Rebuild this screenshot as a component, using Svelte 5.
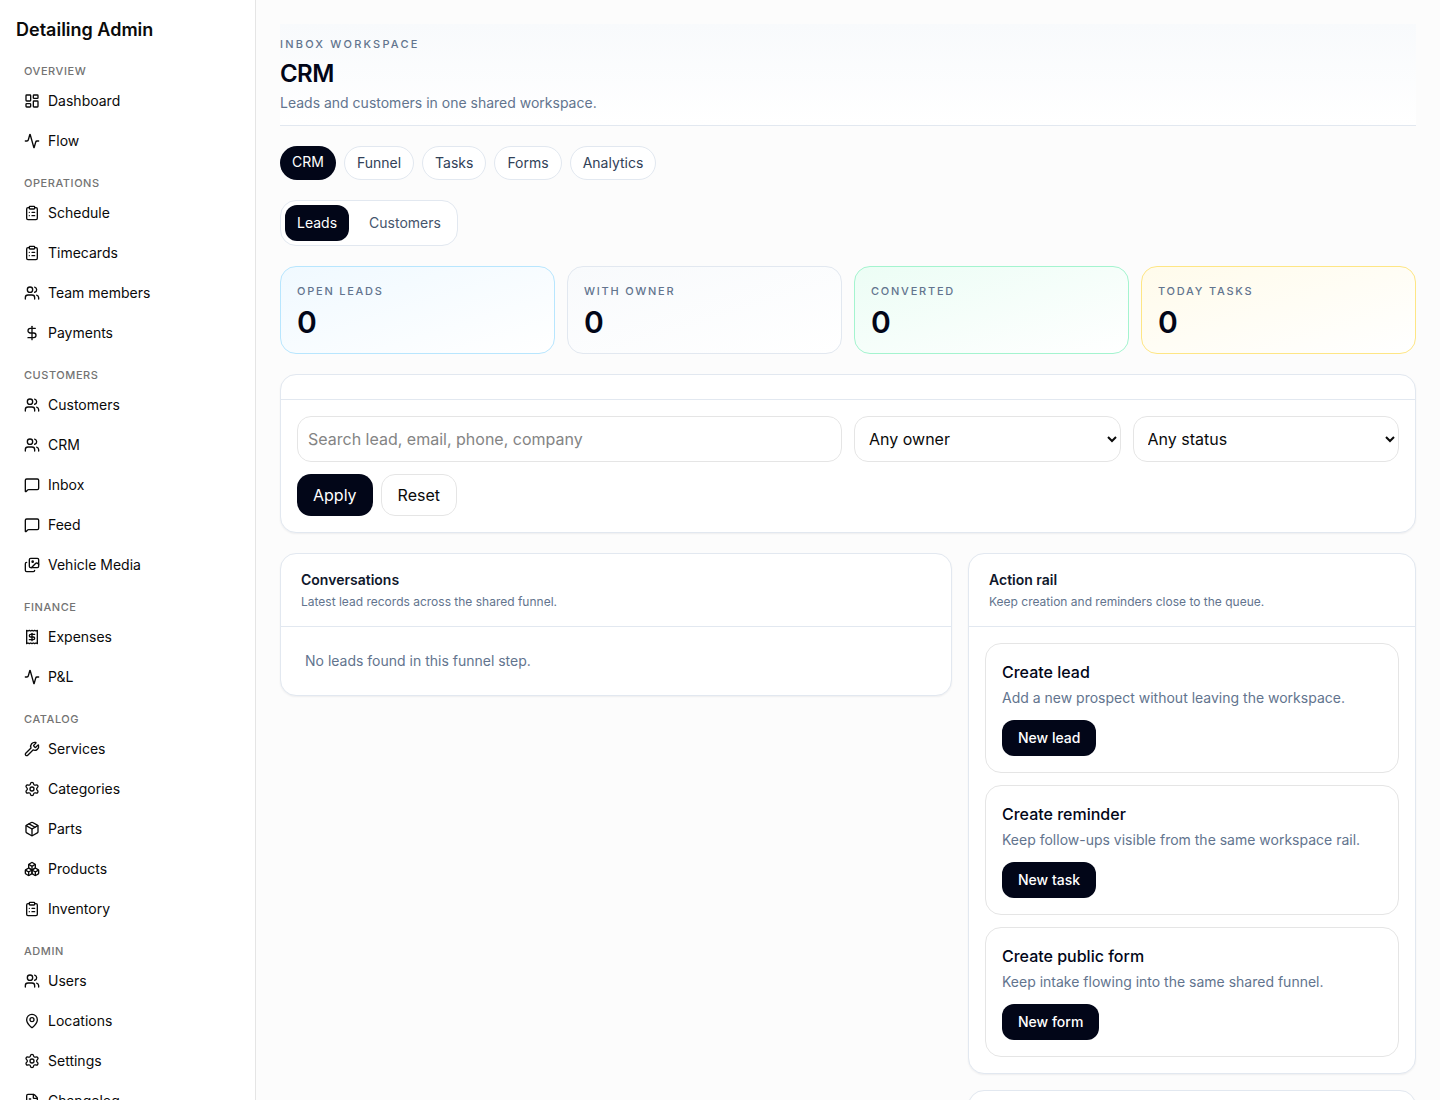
<script lang="ts">
  interface NavItem {
    label: string;
    icon: string;
  }

  interface NavGroup {
    title: string;
    items: NavItem[];
  }

  // every icon is a list of paths on a 24x24 grid
  const icons: Record<string, string[]> = {
    dashboard: [
      "M4 3h5a1 1 0 0 1 1 1v7a1 1 0 0 1-1 1H4a1 1 0 0 1-1-1V4a1 1 0 0 1 1-1z",
      "M15 3h5a1 1 0 0 1 1 1v3a1 1 0 0 1-1 1h-5a1 1 0 0 1-1-1V4a1 1 0 0 1 1-1z",
      "M15 12h5a1 1 0 0 1 1 1v7a1 1 0 0 1-1 1h-5a1 1 0 0 1-1-1v-7a1 1 0 0 1 1-1z",
      "M4 16h5a1 1 0 0 1 1 1v3a1 1 0 0 1-1 1H4a1 1 0 0 1-1-1v-3a1 1 0 0 1 1-1z"
    ],
    activity: [
      "M22 12h-2.48a2 2 0 0 0-1.93 1.46l-2.35 8.36a.25.25 0 0 1-.48 0L9.24 2.18a.25.25 0 0 0-.48 0l-2.35 8.36A2 2 0 0 1 4.49 12H2"
    ],
    clipboard: [
      "M9 2h6a1 1 0 0 1 1 1v2a1 1 0 0 1-1 1H9a1 1 0 0 1-1-1V3a1 1 0 0 1 1-1z",
      "M16 4h2a2 2 0 0 1 2 2v14a2 2 0 0 1-2 2H6a2 2 0 0 1-2-2V6a2 2 0 0 1 2-2h2",
      "M12 11h4M12 16h4M8 11h.01M8 16h.01"
    ],
    users: [
      "M16 21v-2a4 4 0 0 0-4-4H6a4 4 0 0 0-4 4v2",
      "M5 7a4 4 0 1 0 8 0a4 4 0 1 0-8 0",
      "M22 21v-2a4 4 0 0 0-3-3.87",
      "M16 3.13a4 4 0 0 1 0 7.75"
    ],
    dollar: [
      "M12 2v20",
      "M17 5H9.5a3.5 3.5 0 0 0 0 7h5a3.5 3.5 0 0 1 0 7H6"
    ],
    message: [
      "M22 17a2 2 0 0 1-2 2H6.828a2 2 0 0 0-1.414.586l-2.202 2.202A.71.71 0 0 1 2 21.286V5a2 2 0 0 1 2-2h16a2 2 0 0 1 2 2z"
    ],
    images: [
      "m22 11-1.296-1.296a2.4 2.4 0 0 0-3.408 0L11 16",
      "M4 8a2 2 0 0 0-2 2v10a2 2 0 0 0 2 2h10a2 2 0 0 0 2-2",
      "M12 7a1 1 0 1 0 2 0a1 1 0 1 0-2 0",
      "M10 2h10a2 2 0 0 1 2 2v10a2 2 0 0 1-2 2H10a2 2 0 0 1-2-2V4a2 2 0 0 1 2-2z"
    ],
    receipt: [
      "M4 2v20l2-1 2 1 2-1 2 1 2-1 2 1 2-1 2 1V2l-2 1-2-1-2 1-2-1-2 1-2-1-2 1Z",
      "M16 8h-6a2 2 0 1 0 0 4h4a2 2 0 1 1 0 4H8",
      "M12 17.5v-11"
    ],
    wrench: [
      "M14.7 6.3a1 1 0 0 0 0 1.4l1.6 1.6a1 1 0 0 0 1.4 0l3.106-3.105c.32-.322.863-.22.983.218a6 6 0 0 1-8.259 7.057l-7.91 7.91a1 1 0 0 1-2.999-3l7.91-7.91a6 6 0 0 1 7.057-8.259c.438.12.54.662.219.984z"
    ],
    settings: [
      "M9.671 4.136a2.34 2.34 0 0 1 4.659 0 2.34 2.34 0 0 0 3.319 1.915 2.34 2.34 0 0 1 2.33 4.033 2.34 2.34 0 0 0 0 3.831 2.34 2.34 0 0 1-2.33 4.033 2.34 2.34 0 0 0-3.319 1.915 2.34 2.34 0 0 1-4.659 0 2.34 2.34 0 0 0-3.32-1.915 2.34 2.34 0 0 1-2.33-4.033 2.34 2.34 0 0 0 0-3.831A2.34 2.34 0 0 1 6.35 6.051a2.34 2.34 0 0 0 3.319-1.915",
      "M9 12a3 3 0 1 0 6 0a3 3 0 1 0-6 0"
    ],
    box: [
      "M11 21.73a2 2 0 0 0 2 0l7-4A2 2 0 0 0 21 16V8a2 2 0 0 0-1-1.73l-7-4a2 2 0 0 0-2 0l-7 4A2 2 0 0 0 3 8v8a2 2 0 0 0 1 1.73z",
      "M12 22V12",
      "M3.29 7L12 12L20.71 7",
      "m7.5 4.27 9 5.15"
    ],
    boxes: [
      "M2.97 12.92A2 2 0 0 0 2 14.63v3.24a2 2 0 0 0 .97 1.71l3 1.8a2 2 0 0 0 2.06 0L12 19v-5.5l-5-3-4.03 2.42Z",
      "m7 16.5-4.74-2.85M7 16.5l5-3M7 16.5v5.17",
      "M12 13.5V19l3.97 2.38a2 2 0 0 0 2.06 0l3-1.8a2 2 0 0 0 .97-1.71v-3.24a2 2 0 0 0-.97-1.71L17 10.5l-5 3Z",
      "m17 16.5-5-3M17 16.5l4.74-2.85M17 16.5v5.17",
      "M7.97 4.42A2 2 0 0 0 7 6.13v4.37l5 3 5-3V6.13a2 2 0 0 0-.97-1.71l-3-1.8a2 2 0 0 0-2.06 0l-3 1.8Z",
      "M12 8 7.26 5.15M12 8l4.74-2.85M12 13.5V8"
    ],
    pin: [
      "M20 10c0 4.993-5.539 10.193-7.399 11.799a1 1 0 0 1-1.202 0C9.539 20.193 4 14.993 4 10a8 8 0 0 1 16 0",
      "M9 10a3 3 0 1 0 6 0a3 3 0 1 0-6 0"
    ],
    file: [
      "M6 22a2 2 0 0 1-2-2V4a2 2 0 0 1 2-2h8a2.4 2.4 0 0 1 1.704.706l3.588 3.588A2.4 2.4 0 0 1 20 8v12a2 2 0 0 1-2 2z",
      "M14 2v5a1 1 0 0 0 1 1h5",
      "M10 9H8M16 13H8M16 17H8"
    ]
  };

  const groups: NavGroup[] = [
    {
      title: "Overview",
      items: [
        { label: "Dashboard", icon: "dashboard" },
        { label: "Flow", icon: "activity" }
      ]
    },
    {
      title: "Operations",
      items: [
        { label: "Schedule", icon: "clipboard" },
        { label: "Timecards", icon: "clipboard" },
        { label: "Team members", icon: "users" },
        { label: "Payments", icon: "dollar" }
      ]
    },
    {
      title: "Customers",
      items: [
        { label: "Customers", icon: "users" },
        { label: "CRM", icon: "users" },
        { label: "Inbox", icon: "message" },
        { label: "Feed", icon: "message" },
        { label: "Vehicle Media", icon: "images" }
      ]
    },
    {
      title: "Finance",
      items: [
        { label: "Expenses", icon: "receipt" },
        { label: "P&L", icon: "activity" }
      ]
    },
    {
      title: "Catalog",
      items: [
        { label: "Services", icon: "wrench" },
        { label: "Categories", icon: "settings" },
        { label: "Parts", icon: "box" },
        { label: "Products", icon: "boxes" },
        { label: "Inventory", icon: "clipboard" }
      ]
    },
    {
      title: "Admin",
      items: [
        { label: "Users", icon: "users" },
        { label: "Locations", icon: "pin" },
        { label: "Settings", icon: "settings" },
        { label: "Changelog", icon: "file" }
      ]
    }
  ];

  const tabs = ["CRM", "Funnel", "Tasks", "Forms", "Analytics"];
  const views = ["Leads", "Customers"];

  const stats = [
    { label: "Open leads", value: 0, tone: "sky" },
    { label: "With owner", value: 0, tone: "slate" },
    { label: "Converted", value: 0, tone: "emerald" },
    { label: "Today tasks", value: 0, tone: "amber" }
  ];

  const actions = [
    { title: "Create lead", text: "Add a new prospect without leaving the workspace.", button: "New lead" },
    { title: "Create reminder", text: "Keep follow-ups visible from the same workspace rail.", button: "New task" },
    { title: "Create public form", text: "Keep intake flowing into the same shared funnel.", button: "New form" }
  ];

  let activeTab = $state("CRM");
  let activeView = $state("Leads");
  let search = $state("");
  let owner = $state("");
  let status = $state("");

  const applyFilters = (e: Event): void => {
    e.preventDefault();
  }

  const resetFilters = (): void => {
    search = "";
    owner = "";
    status = "";
  }
</script>

<div class="app">

  <aside class="sidebar">
    <div class="brand">Detailing Admin</div>

    <nav class="groups">
      {#each groups as group}
        <section class="group">
          <h2 class="group-title">{group.title}</h2>
          {#each group.items as item}
            <a class="nav-item" href="#{item.label}">
              <svg class="icon" viewBox="0 0 24 24" aria-hidden="true">
                {#each icons[item.icon] as d}
                  <path {d} />
                {/each}
              </svg>
              <span>{item.label}</span>
            </a>
          {/each}
        </section>
      {/each}
    </nav>
  </aside>

  <main class="main">

    <header class="page-header">
      <div class="eyebrow">Inbox workspace</div>
      <h1>CRM</h1>
      <p>Leads and customers in one shared workspace.</p>
    </header>

    <nav class="tabs">
      {#each tabs as tab}
        <a
          class={activeTab === tab ? "tab active" : "tab"}
          href="#{tab}"
          onclick={() => activeTab = tab}
        >{tab}</a>
      {/each}
    </nav>

    <div class="switcher">
      {#each views as view}
        <button
          class={activeView === view ? "switch active" : "switch"}
          onclick={() => activeView = view}
        >{view}</button>
      {/each}
    </div>

    <section class="stats">
      {#each stats as stat}
        <div class="stat {stat.tone}">
          <div class="stat-label">{stat.label}</div>
          <div class="stat-value">{stat.value}</div>
        </div>
      {/each}
    </section>

    <section class="panel">
      <div class="filter-head"></div>
      <form class="filters" onsubmit={applyFilters}>
        <input
          class="field search"
          type="text"
          aria-label="Search"
          placeholder="Search lead, email, phone, company"
          bind:value={search}
        >
        <select class="field" aria-label="Owner" bind:value={owner}>
          <option value="">Any owner</option>
        </select>
        <select class="field" aria-label="Status" bind:value={status}>
          <option value="">Any status</option>
        </select>
        <div class="filter-buttons">
          <button class="bttn apply" type="submit">Apply</button>
          <button class="bttn reset" type="button" onclick={resetFilters}>Reset</button>
        </div>
      </form>
    </section>

    <div class="columns">

      <section class="panel">
        <div class="panel-head">
          <h2>Conversations</h2>
          <p>Latest lead records across the shared funnel.</p>
        </div>
        <p class="empty">No leads found in this funnel step.</p>
      </section>

      <div class="rail">
        <section class="panel">
          <div class="panel-head">
            <h2>Action rail</h2>
            <p>Keep creation and reminders close to the queue.</p>
          </div>
          <div class="cards">
            {#each actions as action}
              <article class="card">
                <h3>{action.title}</h3>
                <p>{action.text}</p>
                <button class="card-bttn">{action.button}</button>
              </article>
            {/each}
          </div>
        </section>

        <section class="panel">
          <div class="panel-head"></div>
        </section>
      </div>

    </div>

  </main>

</div>

<style>
  :global(body) {
    margin: 0;
    background-color: #fcfcfc;
  }

  .app, .app * {
    box-sizing: border-box;
  }

  .app {
    display: flex;
    height: 100vh;
    font-family: Inter, "Liberation Sans", sans-serif;
    font-size: 14px;
    line-height: 20px;
    color: #0a0a0a;
  }

  h1, h2, h3, p {
    margin: 0;
  }

  a {
    color: inherit;
    text-decoration: none;
  }

  button, input, select {
    font: inherit;
    color: inherit;
  }

  button {
    border: none;
    cursor: pointer;
  }

  .sidebar {
    flex: 0 0 256px;
    overflow-y: auto;
    scrollbar-width: none;
    padding: 16px;
    background-color: white;
    border-right: 1px solid #e5e5e5;
  }

  .brand {
    margin-bottom: 19px;
    font-size: 18px;
    line-height: 28px;
    font-weight: 600;
  }

  .groups {
    display: flex;
    flex-direction: column;
    gap: 16px;
  }

  .group {
    display: flex;
    flex-direction: column;
    gap: 4px;
  }

  .group-title {
    padding: 0 8px;
    font-size: 11px;
    line-height: 16px;
    font-weight: 500;
    letter-spacing: 0.05em;
    text-transform: uppercase;
    color: #737373;
  }

  .nav-item {
    display: flex;
    align-items: center;
    gap: 8px;
    padding: 8px;
    border-radius: 8px;
  }

  .icon {
    width: 16px;
    height: 16px;
    fill: none;
    stroke: currentColor;
    stroke-width: 2;
    stroke-linecap: round;
    stroke-linejoin: round;
  }

  .main {
    flex: 1;
    min-width: 0;
    overflow-y: auto;
    scrollbar-width: none;
    display: flex;
    flex-direction: column;
    gap: 20px;
    padding: 24px;
  }

  .main > * {
    flex-shrink: 0;
  }

  .page-header {
    padding: 12px 0;
    border-bottom: 1px solid #e2e8f0;
    background: linear-gradient(to bottom, #f8fafc, #ffffff);
  }

  .eyebrow {
    font-size: 11px;
    line-height: 16px;
    font-weight: 500;
    letter-spacing: 0.2em;
    text-transform: uppercase;
    color: #62748e;
  }

  .page-header h1 {
    margin-top: 6px;
    font-size: 24px;
    line-height: 32px;
    font-weight: 600;
    letter-spacing: -0.025em;
    color: #020618;
  }

  .page-header p {
    margin-top: 3px;
    color: #62748e;
  }

  .tabs {
    display: flex;
    flex-wrap: wrap;
    gap: 8px;
  }

  .tab {
    padding: 6px 12px;
    border: 1px solid #e2e8f0;
    border-radius: 17px;
    background-color: white;
    color: #314158;
  }

  .tab.active {
    border: none;
    background-color: #020618;
    color: white;
  }

  .switcher {
    align-self: flex-start;
    display: flex;
    gap: 8px;
    padding: 4px;
    border: 1px solid #e2e8f0;
    border-radius: 16px;
    background-color: white;
  }

  .switch {
    padding: 8px 12px;
    border-radius: 12px;
    background-color: transparent;
    color: #45556c;
  }

  .switch.active {
    background-color: #020618;
    color: white;
  }

  .stats {
    display: grid;
    grid-template-columns: repeat(4, minmax(0, 1fr));
    gap: 12px;
  }

  .stat {
    padding: 16px 16px 13px;
    border: 1px solid #e2e8f0;
    border-radius: 16px;
  }

  .stat.sky {
    border-color: #b8e6fe;
    background: linear-gradient(to bottom right, #f0f9ff, #ffffff);
  }

  .stat.slate {
    background: linear-gradient(to bottom right, #f8fafc, #ffffff);
  }

  .stat.emerald {
    border-color: #a4f4cf;
    background: linear-gradient(to bottom right, #ecfdf5, #ffffff);
  }

  .stat.amber {
    border-color: #fee685;
    background: linear-gradient(to bottom right, #fffbeb, #ffffff);
  }

  .stat-label {
    font-size: 11px;
    line-height: 16px;
    font-weight: 500;
    letter-spacing: 0.16em;
    text-transform: uppercase;
    color: #62748e;
  }

  .stat-value {
    margin-top: 5px;
    font-size: 30px;
    line-height: 36px;
    font-weight: 600;
    color: #020618;
  }

  .panel {
    overflow: hidden;
    border: 1px solid #e2e8f0;
    border-radius: 16px;
    background-color: white;
    box-shadow: 0 1px 2px rgba(15,23,42,.06);
  }

  .filter-head {
    height: 25px;
    border-bottom: 1px solid #e2e8f0;
  }

  .filters {
    display: grid;
    grid-template-columns: repeat(4, minmax(0, 1fr));
    gap: 12px;
    padding: 16px;
    font-size: 16px;
    line-height: 24px;
  }

  .field {
    width: 100%;
    height: 46px;
    padding: 10px;
    border: 1px solid #e5e5e5;
    border-radius: 14px;
    background-color: white;
  }

  .field.search {
    grid-column: span 2;
  }

  .field::placeholder {
    color: #848484;
  }

  .filter-buttons {
    grid-column: 1 / -1;
    display: flex;
    gap: 8px;
  }

  .bttn {
    padding: 8px 16px;
    border-radius: 14px;
  }

  .bttn.apply {
    background-color: #020618;
    color: white;
  }

  .bttn.reset {
    border: 1px solid #e5e5e5;
    background-color: white;
  }

  .columns {
    display: grid;
    grid-template-columns: minmax(0, 3fr) minmax(0, 2fr);
    align-items: start;
    gap: 16px;
  }

  .panel-head {
    padding: 16px 20px;
    border-bottom: 1px solid #e2e8f0;
  }

  .panel-head h2 {
    font-size: 14px;
    line-height: 20px;
    font-weight: 600;
    color: #0f172b;
  }

  .panel-head p {
    margin-top: 4px;
    font-size: 12px;
    line-height: 16px;
    color: #62748e;
  }

  .empty {
    padding: 24px;
    color: #62748e;
  }

  .rail {
    display: flex;
    flex-direction: column;
    gap: 16px;
  }

  .cards {
    display: flex;
    flex-direction: column;
    gap: 12px;
    padding: 16px;
  }

  .card {
    padding: 16px;
    border: 1px solid #e5e5e5;
    border-radius: 16px;
  }

  .card h3 {
    font-size: 16px;
    line-height: 24px;
    font-weight: 500;
    color: #020618;
  }

  .card p {
    margin-top: 4px;
    color: #62748e;
  }

  .card-bttn {
    margin-top: 12px;
    padding: 8px 16px;
    border-radius: 12px;
    background-color: #020618;
    font-weight: 500;
    color: white;
  }
</style>
